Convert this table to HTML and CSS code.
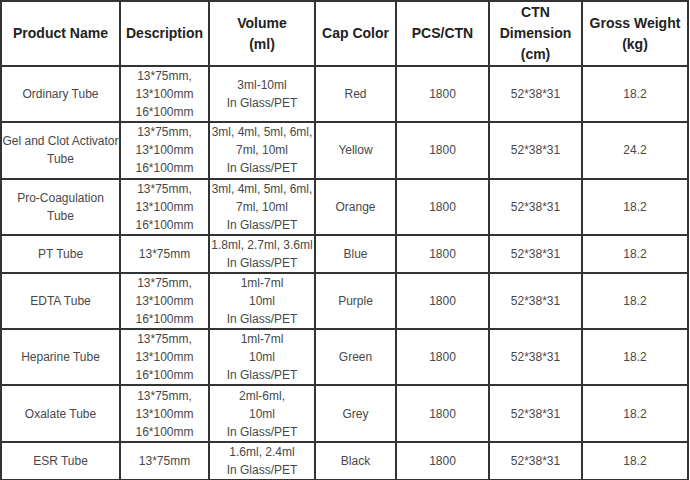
FILE: index.html
```html
<!DOCTYPE html>
<html>
<head>
<meta charset="utf-8">
<link rel="stylesheet" href="styles.css">
</head>
<body>
<table class="spec">
  <colgroup>
    <col class="c1"><col class="c2"><col class="c3"><col class="c4"><col class="c5"><col class="c6"><col class="c7">
  </colgroup>
  <thead>
    <tr>
      <th>Product Name</th>
      <th>Description</th>
      <th>Volume<br>(ml)</th>
      <th>Cap Color</th>
      <th>PCS/CTN</th>
      <th>CTN<br>Dimension<br>(cm)</th>
      <th>Gross Weight<br>(kg)</th>
    </tr>
  </thead>
  <tbody>
    <tr class="r3">
      <td>Ordinary Tube</td>
      <td>13*75mm,<br>13*100mm<br>16*100mm</td>
      <td>3ml-10ml<br>In Glass/PET</td>
      <td>Red</td><td>1800</td><td>52*38*31</td><td>18.2</td>
    </tr>
    <tr class="r3">
      <td>Gel and Clot Activator<br>Tube</td>
      <td>13*75mm,<br>13*100mm<br>16*100mm</td>
      <td>3ml, 4ml, 5ml, 6ml,<br>7ml, 10ml<br>In Glass/PET</td>
      <td>Yellow</td><td>1800</td><td>52*38*31</td><td>24.2</td>
    </tr>
    <tr class="r3">
      <td>Pro-Coagulation<br>Tube</td>
      <td>13*75mm,<br>13*100mm<br>16*100mm</td>
      <td>3ml, 4ml, 5ml, 6ml,<br>7ml, 10ml<br>In Glass/PET</td>
      <td>Orange</td><td>1800</td><td>52*38*31</td><td>18.2</td>
    </tr>
    <tr class="r2">
      <td>PT Tube</td>
      <td>13*75mm</td>
      <td>1.8ml, 2.7ml, 3.6ml<br>In Glass/PET</td>
      <td>Blue</td><td>1800</td><td>52*38*31</td><td>18.2</td>
    </tr>
    <tr class="r3">
      <td>EDTA Tube</td>
      <td>13*75mm,<br>13*100mm<br>16*100mm</td>
      <td>1ml-7ml<br>10ml<br>In Glass/PET</td>
      <td>Purple</td><td>1800</td><td>52*38*31</td><td>18.2</td>
    </tr>
    <tr class="r3">
      <td>Heparine Tube</td>
      <td>13*75mm,<br>13*100mm<br>16*100mm</td>
      <td>1ml-7ml<br>10ml<br>In Glass/PET</td>
      <td>Green</td><td>1800</td><td>52*38*31</td><td>18.2</td>
    </tr>
    <tr class="r3">
      <td>Oxalate Tube</td>
      <td>13*75mm,<br>13*100mm<br>16*100mm</td>
      <td>2ml-6ml,<br>10ml<br>In Glass/PET</td>
      <td>Grey</td><td>1800</td><td>52*38*31</td><td>18.2</td>
    </tr>
    <tr class="r2 last">
      <td>ESR Tube</td>
      <td>13*75mm</td>
      <td>1.6ml, 2.4ml<br>In Glass/PET</td>
      <td>Black</td><td>1800</td><td>52*38*31</td><td>18.2</td>
    </tr>
  </tbody>
</table>
</body>
</html>
```

FILE: styles.css
```css
html, body {
  margin: 0;
  padding: 0;
  background: #ffffff;
}

body {
  font-family: "Liberation Sans", Arial, sans-serif;
}

.spec {
  border-collapse: separate;
  border-spacing: 0;
  table-layout: fixed;
  width: 689px;
  border-top: 2px solid #333333;
  border-left: 2px solid #333333;
}

.c1 { width: 119px; }
.c2 { width: 89px; }
.c3 { width: 106px; }
.c4 { width: 81px; }
.c5 { width: 93px; }
.c6 { width: 93px; }
.c7 { width: 106px; }

.spec th,
.spec td {
  border-right: 2px solid #333333;
  border-bottom: 2px solid #333333;
  padding: 0;
  text-align: center;
  vertical-align: middle;
  white-space: nowrap;
  overflow: visible;
}

.spec th {
  font-size: 14px;
  font-weight: bold;
  color: #222222;
  line-height: 21px;
  height: 62px;
}

.spec td {
  font-size: 12px;
  color: #484848;
  line-height: 18px;
}

.r3 td {
  height: 54.3px;
}

.r2 td {
  height: 35px;
}

.r2.last td {
  height: 36.5px;
}
```
